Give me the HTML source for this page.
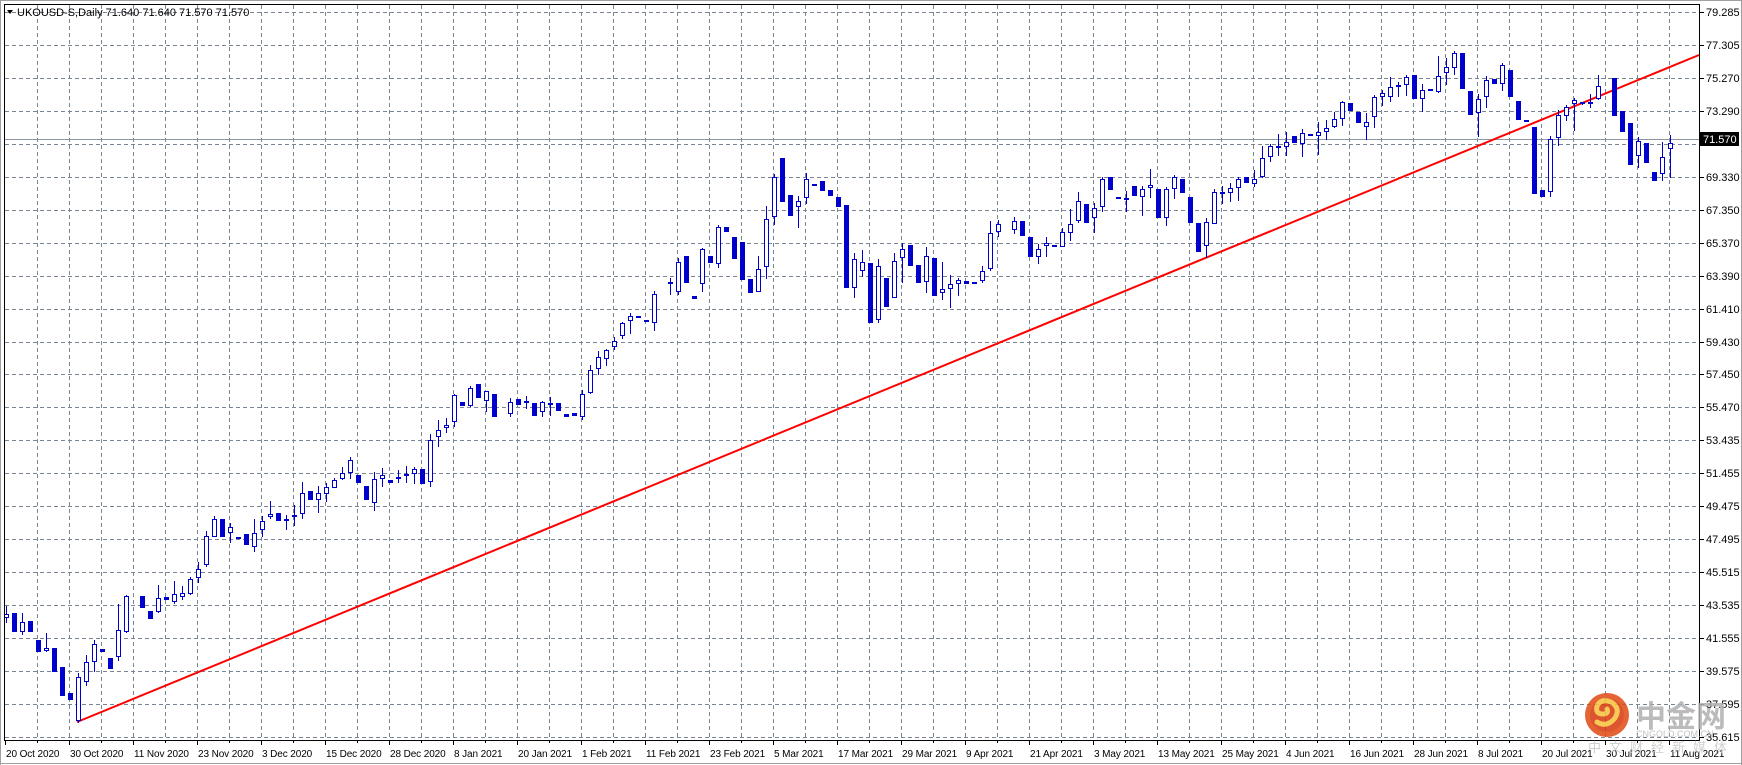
<!DOCTYPE html>
<html><head><meta charset="utf-8"><style>
html,body{margin:0;padding:0;background:#fff;width:1742px;height:765px;overflow:hidden}
svg{display:block}
text{font-family:"Liberation Sans",Tahoma,sans-serif;font-size:11px;fill:#000}
text.d{font-size:10px;letter-spacing:-0.1px}
</style></head><body>
<svg id="s" width="1742" height="765" xmlns="http://www.w3.org/2000/svg">
<rect x="0" y="0" width="1742" height="765" fill="#fff"/>
<line x1="0" y1="0.5" x2="1742" y2="0.5" stroke="#a0a0a0"/>
<line x1="0.5" y1="0" x2="0.5" y2="765" stroke="#a0a0a0"/>
<line x1="0" y1="763.5" x2="1742" y2="763.5" stroke="#a0a0a0"/>
<line x1="1741.5" y1="0" x2="1741.5" y2="765" stroke="#a0a0a0"/>
<g id="grid"></g>
<line x1="4" y1="139.5" x2="1699" y2="139.5" stroke="#8c96a0" stroke-width="1"/>
<line x1="77" y1="722" x2="1699" y2="55" stroke="#ff0000" stroke-width="2"/>
<g id="c"></g>
<rect x="4.5" y="4.5" width="1695" height="736" fill="none" stroke="#000"/>
<g id="ax"></g>
<polygon points="7,10 13,10 10,14" fill="#000"/>
<text x="17" y="16">UKOUSD-S,Daily  71.640 71.640 71.570 71.570</text>
<rect x="1700" y="132" width="39" height="14" fill="#000"/>
<text x="1703" y="143" style="fill:#fff">71.570</text>
<g opacity="0.85">
<circle cx="1607" cy="715" r="22" fill="#e04a12"/>
<circle cx="1607" cy="715" r="17" fill="#d8380a"/>
<path d="M1597 722 q10 6 18 -4 q6 -10 -4 -16 q-10 -4 -14 4 q-2 8 6 8 q6 0 4 -5" fill="none" stroke="#f6c13a" stroke-width="5" stroke-linecap="round"/>
<text x="1636" y="727" style="font-family:'Noto Sans CJK SC',sans-serif;font-size:30px;font-weight:bold;fill:#b0b0b0">中金网</text>
<text x="1636" y="737" style="font-size:9px;fill:#b8b8b8">CNGOLD.COM.CN</text>
<text x="1588" y="752" style="font-family:'Noto Sans CJK SC',sans-serif;font-size:13px;fill:#c8c8c8;letter-spacing:8px">中文财经新媒体</text>
</g>
</svg>
<script>
var NS="http://www.w3.org/2000/svg";
function el(p,t,a,tx){var e=document.createElementNS(NS,t);for(var k in a)e.setAttribute(k,a[k]);if(tx)e.textContent=tx;p.appendChild(e);return e;}
var g=document.getElementById('grid');
for(var k=0;k<23;k++){var y=Math.round(12+k*32.95)+0.5;el(g,'line',{x1:5,y1:y,x2:1699,y2:y,stroke:'#7a8594','stroke-dasharray':'4,3'});}
for(var x=37;x<1699;x+=32){el(g,'line',{x1:x+0.5,y1:5,x2:x+0.5,y2:740,stroke:'#7a8594','stroke-dasharray':'4,3'});}
var ax=document.getElementById('ax');
var pr=["79.285","77.305","75.270","73.290","71.310","69.330","67.350","65.370","63.390","61.410","59.430","57.450","55.470","53.435","51.455","49.475","47.495","45.515","43.535","41.555","39.575","37.595","35.615"];
for(var k=0;k<23;k++){var y=Math.round(12+k*32.95);if(k==4)continue;el(ax,'line',{x1:1700,y1:y+0.5,x2:1704,y2:y+0.5,stroke:'#000'});el(ax,'text',{x:1706,y:y+4},pr[k]);}
var ds=["20 Oct 2020","30 Oct 2020","11 Nov 2020","23 Nov 2020","3 Dec 2020","15 Dec 2020","28 Dec 2020","8 Jan 2021","20 Jan 2021","1 Feb 2021","11 Feb 2021","23 Feb 2021","5 Mar 2021","17 Mar 2021","29 Mar 2021","9 Apr 2021","21 Apr 2021","3 May 2021","13 May 2021","25 May 2021","4 Jun 2021","16 Jun 2021","28 Jun 2021","8 Jul 2021","20 Jul 2021","30 Jul 2021","11 Aug 2021"];
for(var k=0;k<ds.length;k++){var x=5+64*k;el(ax,'line',{x1:x+0.5,y1:740,x2:x+0.5,y2:745,stroke:'#000'});if(k>0)el(ax,'line',{x1:x-31.5,y1:740,x2:x-31.5,y2:743,stroke:'#000'});el(ax,'text',{x:x+1,y:757,'class':'d'},ds[k]);}
var D=[[0,614,618,606,623,1],[1,613,632,0,0,0],[2,622,632,613,635,1],[3,621,632,0,0,0],[4,640,652,0,0,0],[5,648,651,633,652,1],[6,648,672,0,0,0],[7,667,696,0,0,0],[8,693,700,0,0,0],[9,677,721,673,723,1],[10,662,682,655,686,1],[11,644,662,640,672,1],[12,649,652,0,0,0],[13,658,669,0,0,0],[14,630,657,604,661,1],[15,596,632,595,633,1],[17,596,608,0,0,0],[18,611,619,0,0,0],[19,598,612,585,613,1],[20,597,600,0,0,0],[21,594,602,581,604,1],[22,593,597,586,600,1],[23,579,594,577,595,1],[24,569,578,562,583,1],[25,536,565,531,567,1],[26,519,537,516,537,1],[27,519,537,0,0,0],[28,527,533,523,543,1],[29,537,538,0,0,1],[30,534,545,0,0,0],[31,533,547,519,552,1],[32,521,530,516,537,1],[33,514,517,501,519,1],[34,513,521,0,0,0],[35,519,521,515,530,1],[36,515,517,505,526,1],[37,493,514,482,519,1],[38,491,500,0,0,0],[39,493,500,486,513,1],[40,487,494,483,502,1],[41,480,488,478,488,1],[42,473,479,467,480,1],[43,460,473,457,479,1],[44,475,483,0,0,0],[45,486,500,0,0,0],[46,479,503,472,511,1],[47,475,479,468,487,1],[48,480,483,0,0,0],[49,477,478,470,483,1],[50,474,475,466,483,1],[51,469,474,467,484,1],[52,469,484,0,0,0],[53,440,482,434,487,1],[54,430,437,420,447,1],[55,425,428,418,433,1],[56,395,422,394,427,1],[57,402,406,0,0,0],[58,388,406,386,407,1],[59,384,398,0,0,0],[60,391,401,391,412,1],[61,394,417,0,0,0],[63,402,414,398,417,1],[64,399,405,0,0,0],[65,401,402,396,409,1],[66,403,416,0,0,0],[67,402,412,401,417,1],[68,403,404,397,416,1],[69,403,411,0,0,0],[70,414,417,0,0,0],[71,413,416,0,0,0],[72,394,417,390,420,1],[73,370,393,365,394,1],[74,357,369,351,375,1],[75,350,359,349,366,1],[76,341,347,337,350,1],[77,323,336,322,339,1],[78,316,321,313,334,1],[79,316,317,0,0,1],[80,320,322,0,0,0],[81,294,323,291,331,1],[83,282,284,278,295,1],[84,262,292,258,295,1],[85,256,283,0,0,0],[86,296,299,0,0,0],[87,249,284,248,292,1],[88,256,263,0,0,0],[89,227,264,225,268,1],[90,227,232,0,0,0],[91,237,259,0,0,0],[92,242,280,0,0,0],[93,279,293,0,0,0],[94,269,292,256,292,1],[95,219,267,206,279,1],[96,177,217,174,225,1],[97,158,202,0,0,0],[98,195,216,0,0,0],[99,201,207,196,228,1],[100,179,198,173,204,1],[101,184,185,0,0,1],[102,181,191,0,0,0],[103,190,196,0,0,0],[104,197,207,0,0,0],[105,205,288,0,0,0],[106,259,288,253,298,1],[107,262,271,250,277,1],[108,263,323,0,0,0],[109,266,320,259,323,1],[110,278,307,0,0,0],[111,261,298,253,298,1],[112,249,258,243,283,1],[113,245,266,0,0,0],[114,265,283,0,0,0],[115,256,282,247,293,1],[116,258,296,0,0,0],[117,289,293,262,300,1],[118,284,289,275,308,1],[119,280,284,278,296,1],[120,281,284,0,0,0],[121,282,283,0,0,0],[122,271,281,266,283,1],[123,233,269,221,271,1],[124,224,232,220,237,1],[126,221,230,217,234,1],[127,221,236,0,0,0],[128,237,257,0,0,0],[129,249,257,244,264,1],[130,243,246,237,257,1],[131,245,246,0,0,1],[132,232,247,228,247,1],[133,224,233,209,241,1],[134,201,221,192,223,1],[135,204,223,0,0,0],[136,208,218,203,233,1],[137,179,207,177,212,1],[138,177,190,0,0,0],[139,197,199,0,0,0],[140,198,199,191,212,1],[141,186,196,0,0,0],[142,189,197,186,216,1],[143,185,188,169,198,1],[144,189,218,0,0,0],[145,189,218,187,226,1],[146,177,189,175,199,1],[147,179,193,0,0,0],[148,197,223,0,0,0],[149,223,252,0,0,0],[150,222,246,218,258,1],[151,192,224,189,224,1],[152,192,193,186,204,1],[153,188,193,183,202,1],[154,179,188,177,201,1],[155,177,183,0,0,0],[156,179,184,170,187,1],[157,158,177,146,178,1],[158,146,157,144,162,1],[159,146,147,134,156,1],[160,142,147,132,156,1],[161,136,143,0,0,0],[162,133,144,129,157,1],[163,134,136,0,0,0],[164,132,136,122,155,1],[165,128,132,120,140,1],[166,119,127,112,128,1],[167,102,119,101,126,1],[168,103,111,0,0,0],[169,112,123,0,0,0],[170,122,127,113,140,1],[171,97,117,95,128,1],[172,93,97,90,106,1],[173,87,97,77,102,1],[174,85,87,82,97,1],[175,77,85,75,96,1],[176,75,99,0,0,0],[177,90,99,84,112,1],[178,89,91,0,0,0],[179,76,92,56,93,1],[180,67,73,58,85,1],[181,53,68,51,75,1],[182,53,89,0,0,0],[183,91,115,0,0,0],[184,99,113,94,137,1],[185,80,97,76,108,1],[186,79,84,0,0,0],[187,65,84,63,91,1],[188,70,97,0,0,0],[189,101,120,0,0,0],[190,120,121,0,0,0],[191,127,194,0,0,0],[192,190,197,0,0,0],[193,139,192,136,197,1],[194,115,138,110,146,1],[195,107,116,105,121,1],[196,100,104,98,131,1],[197,102,103,102,105,1],[198,102,103,94,108,1],[199,86,99,75,100,1],[201,78,116,0,0,0],[202,111,132,0,0,0],[203,123,165,0,0,0],[204,141,156,137,168,1],[205,143,163,0,0,0],[206,172,181,0,0,0],[207,157,174,142,181,1],[208,143,149,135,178,1]];
var c=document.getElementById('c');var B='#0000cc';
D.forEach(function(d){var x=6+8*d[0];var t=d[1],b=d[2];
if(d[5]){if(d[3]&&d[3]<t)el(c,'line',{x1:x+0.5,y1:d[3],x2:x+0.5,y2:t,stroke:B});if(d[4]&&d[4]>b)el(c,'line',{x1:x+0.5,y1:b,x2:x+0.5,y2:d[4],stroke:B});
if(b-t<2){el(c,'rect',{x:x-2,y:t,width:5,height:2,fill:B});}else el(c,'rect',{x:x-1.5,y:t+0.5,width:4,height:b-t-1,fill:'#fff',stroke:B});}
else{el(c,'rect',{x:x-2,y:t,width:5,height:Math.max(2,b-t),fill:B});}});
</script>
</body></html>
